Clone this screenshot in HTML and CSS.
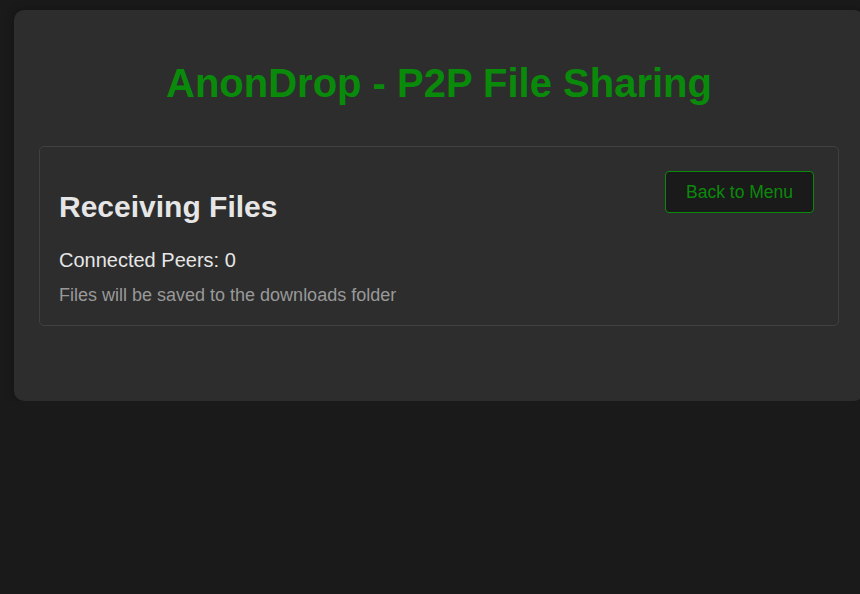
FILE: index.html
```html
<!DOCTYPE html>
<html lang="en">
<head>
<meta charset="utf-8">
<title>AnonDrop - P2P File Sharing</title>
<link rel="stylesheet" href="styles.css">
</head>
<body>
<div class="container">
  <h1 class="title">AnonDrop - P2P File Sharing</h1>
  <div class="card">
    <div class="card-header">
      <h2 class="card-title">Receiving Files</h2>
      <button class="back-btn">Back to Menu</button>
    </div>
    <p class="peers">Connected Peers: 0</p>
    <p class="hint">Files will be saved to the downloads folder</p>
  </div>
</div>
</body>
</html>
```
FILE: styles.css
```css
html {
  overflow: hidden;
}
body {
  margin: 0;
  padding: 10px 0 0 14px;
  background: #1a1a1a;
  font-family: "Liberation Sans", Arial, sans-serif;
  color: #e0e0e0;
}
.container {
  box-sizing: border-box;
  width: 850px;
  background: #2d2d2d;
  border-radius: 10px;
  padding: 25px 25px 75px 25px;
  box-shadow: 0 0 10px rgba(0, 0, 0, 0.3);
}
.title {
  margin: 26px 0 40px;
  text-align: center;
  font-size: 40px;
  font-weight: bold;
  color: #0a8a0a;
}
.card {
  border: 1px solid #404040;
  border-radius: 5px;
  padding: 24px 24px 19px 19px;
}
.card-header {
  display: flex;
  justify-content: space-between;
  align-items: flex-start;
}
.card-title {
  margin: 19px 0 25px;
  font-size: 30px;
  font-weight: bold;
  color: #e6e6e6;
}
.back-btn {
  background: #1a1a1a;
  color: #0a8a0a;
  border: 1px solid #0a8a0a;
  border-radius: 4px;
  padding: 10px 20px;
  font-family: "Liberation Sans", Arial, sans-serif;
  font-size: 17.5px;
  line-height: 20px;
  cursor: pointer;
}
.peers {
  margin: 0 0 13px;
  font-size: 20px;
  color: #e6e6e6;
}
.hint {
  margin: 0;
  font-size: 18px;
  color: #999999;
}
```
